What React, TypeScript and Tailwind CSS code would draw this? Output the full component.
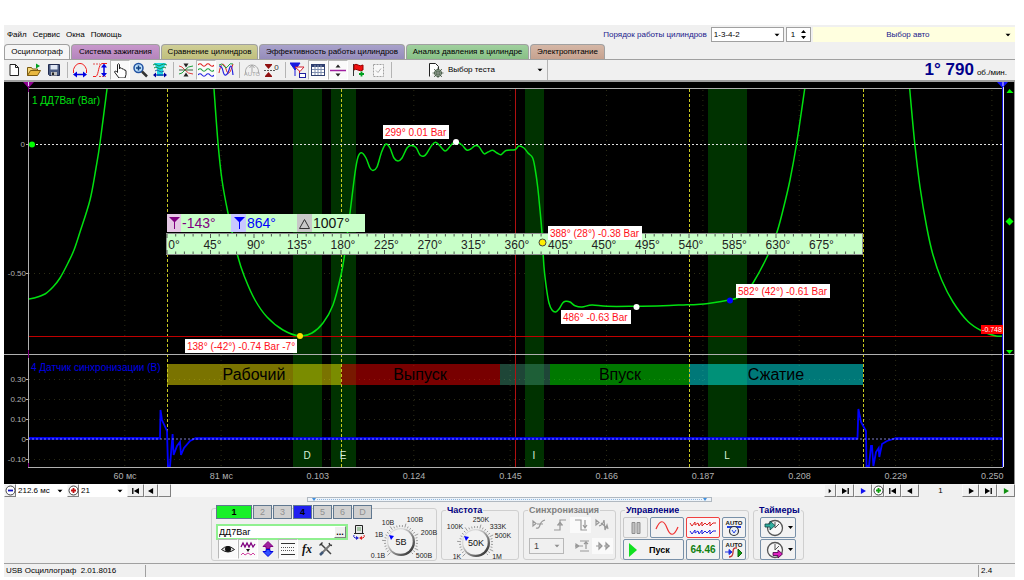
import { useState } from "react"
import type { ReactNode } from "react"
import { clsx } from "clsx"

type Point = [number, number]

const TABS = [
  { label: "Осциллограф", className: "w-[66px] bg-[#f6f6f6]" },
  { label: "Система зажигания", className: "w-[89px] bg-gradient-to-b from-[#c797cb] to-[#b585bd]" },
  { label: "Сравнение цилиндров", className: "w-[97px] bg-gradient-to-b from-[#cfce97] to-[#c0bf7c]" },
  { label: "Эффективность работы цилиндров", className: "w-[146px] bg-gradient-to-b from-[#a9a2cb] to-[#958cbb]" },
  { label: "Анализ давления в цилиндре", className: "w-[123px] bg-gradient-to-b from-[#a0d09e] to-[#88c086]" },
  { label: "Электропитание", className: "w-[75px] bg-gradient-to-b from-[#d5b7a6] to-[#c6a28f]" },
]

const PRESSURE: Point[][] = [
  [[28, 299], [34, 298], [45, 294], [53, 287], [60, 278], [68, 263], [74, 250], [80, 232], [90, 200], [96, 168], [100, 143], [107, 89]],
  [
    [214, 89], [218, 143], [222, 180], [228, 213], [238, 257], [245, 278], [255, 300], [267, 317], [283, 330], [300, 336],
    [312, 333], [323, 323], [333, 305], [341, 275], [345, 252], [350, 213], [355, 173], [358, 157], [361.5, 152.7], [366, 158],
    [370, 168], [373, 170.5], [377, 167], [381.7, 151.7], [386, 144], [390, 148], [394, 158], [398, 161], [402, 158],
    [407, 148], [411, 145.5], [416, 147.5], [420, 155], [424, 156], [427, 153], [432, 145], [435.7, 142.3], [440, 146],
    [445, 151], [449, 147.7], [453, 143], [456.7, 141.7], [462, 145], [466.7, 150], [470.7, 149], [475, 145.7],
    [479, 146.7], [484, 153.7], [488, 152], [492.7, 150.3], [497, 153], [501, 154.7], [506, 150.5], [515, 149.7],
    [519, 146], [524, 148], [528, 153], [532.7, 158], [535.3, 170], [537.7, 187], [540, 210], [542, 233], [544, 267],
    [546.7, 290], [549, 303], [552, 310], [555.7, 312], [559, 309], [562.7, 303], [565.7, 301.3], [570, 302],
    [575, 305.7], [582, 307], [592, 305], [607, 306.3], [633, 306.3], [663, 305.8], [687, 304.7], [697, 304.6],
    [713, 302.7], [729, 300], [737, 298], [745, 292], [753, 283], [768, 255], [776.7, 233], [783, 210], [790, 180],
    [796.7, 143], [804.7, 89],
  ],
  [[909.7, 89], [914.7, 143], [920, 187], [926.7, 227], [933, 255], [941.7, 280], [953, 302], [968, 321.5], [982, 331], [996, 336], [1003, 336]],
]

const SYNC =
  "M28 438H160L160.5 410L162 420L167 431L168 466H170L172.6 434L173.6 455L177 446L180 442L181 455L184 448L190 441L195 438.5" +
  "H857.5L858.4 409L861 422L866 431L866.5 466H869L871 446H872L873.4 466L876 452L878.7 448L879.3 457L882 444L887 441L895 438.5H1003"

const BANDS = [
  { x: 293, width: 29, label: "D", at: 307 },
  { x: 331, width: 25, label: "E", at: 343 },
  { x: 525, width: 19, label: "I", at: 534 },
  { x: 708, width: 39, label: "L", at: 727 },
]

const STROKES = [
  { x: 167, width: 174, label: "Рабочий", at: 254, fill: "#f4e600" },
  { x: 341, width: 159, label: "Выпуск", at: 420, fill: "#f00000" },
  { x: 500, width: 50, label: "", at: 0, fill: "#3c8c6e" },
  { x: 550, width: 139, label: "Впуск", at: 620, fill: "#00f000" },
  { x: 689, width: 174, label: "Сжатие", at: 776, fill: "#00f0f0" },
]

const TIMES = ["60 мс", "81 мс", "0.103", "0.124", "0.145", "0.166", "0.187", "0.208", "0.229", "0.250"]

const CALLOUTS = [
  { x: 383, y: 125, width: 66, text: "299° 0.01 Bar" },
  { x: 548, y: 226, width: 94, text: "388° (28°) -0.38 Bar" },
  { x: 561, y: 310, width: 70, text: "486° -0.63 Bar" },
  { x: 185, y: 339, width: 112, text: "138° (-42°) -0.74 Bar -7°" },
  { x: 736, y: 284, width: 94, text: "582° (42°) -0.61 Bar" },
]

// Catmull-Rom spline through the samples
function smooth(points: Point[]) {
  let d = `M${points[0][0]} ${points[0][1]}`
  for (let i = 0; i < points.length - 1; i++) {
    const a = points[Math.max(i - 1, 0)]
    const b = points[i]
    const c = points[i + 1]
    const e = points[Math.min(i + 2, points.length - 1)]
    d += `C${b[0] + (c[0] - a[0]) / 6} ${b[1] + (c[1] - a[1]) / 6} ${c[0] - (e[0] - b[0]) / 6} ${c[1] - (e[1] - b[1]) / 6} ${c[0]} ${c[1]}`
  }
  return d
}

function Icon({ children, className = "h-4 w-4", box = "0 0 16 16" }: { children: ReactNode; className?: string; box?: string }) {
  return (
    <svg viewBox={box} className={clsx("shrink-0", className)} fill="none" stroke="currentColor" aria-hidden="true">
      {children}
    </svg>
  )
}

function ToolButton({ label, pressed, children }: { label: string; pressed?: boolean; children: ReactNode }) {
  return (
    <button
      type="button"
      aria-label={label}
      className={clsx(
        "flex h-5 w-5 shrink-0 items-center justify-center",
        pressed && "border border-[#b8b8b8] border-r-white border-b-white bg-[#fafafa]",
      )}
    >
      <Icon>{children}</Icon>
    </button>
  )
}

function Separator() {
  return (
    <div className="flex w-[6px] shrink-0 justify-center">
      <div className="h-4 w-px bg-[#b4b4b4]" />
    </div>
  )
}

function Caret() {
  return (
    <svg viewBox="0 0 7 4" className="pointer-events-none absolute top-1/2 right-1 h-[3px] w-[6px] -translate-y-1/2" aria-hidden="true">
      <path d="M0 0h7L3.5 4z" fill="currentColor" />
    </svg>
  )
}

function Select({ label, value, className, selectClass }: { label: string; value: string; className?: string; selectClass?: string }) {
  return (
    <div className={clsx("relative", className)}>
      <select aria-label={label} className={clsx("block h-full w-full appearance-none outline-none", selectClass)}>
        <option>{value}</option>
      </select>
      <Caret />
    </div>
  )
}

function MenuBar() {
  return (
    <div className="flex h-[19px] items-center">
      <nav className="flex gap-[6px] pl-[3px]">
        {["Файл", "Сервис", "Окна", "Помощь"].map((item) => (
          <button key={item} type="button">
            {item}
          </button>
        ))}
      </nav>
      <label htmlFor="order" className="mr-1 ml-auto text-[#1a1a8c]">
        Порядок работы цилиндров
      </label>
      <div className="relative mr-[2px] h-[15px] w-[73px]">
        <select id="order" className="block h-full w-full appearance-none border border-[#a0a0a0] bg-white pl-[2px]">
          <option>1-3-4-2</option>
        </select>
        <Caret />
      </div>
      <div className="mr-[2px] flex h-[15px] w-[25px] items-center border border-[#a0a0a0] bg-white">
        <input aria-label="Цилиндр" defaultValue="1" className="w-3 min-w-0 flex-1 pl-1 outline-none" />
        <svg viewBox="0 0 7 11" className="mr-[3px] h-[11px] w-[7px]" aria-hidden="true">
          <path d="M1 4h5L3.5 1zM1 7h5L3.5 10z" />
        </svg>
      </div>
      <Select
        label="Авто"
        value="Выбор авто"
        className="h-[15px] w-1/5"
        selectClass="bg-[#ffffdf] pr-3 text-center text-[#1a1a8c]"
      />
    </div>
  )
}

function Tabs() {
  const [active, setActive] = useState(0)
  return (
    <div role="tablist" className="flex h-[15px] items-end gap-px">
      {TABS.map((tab, i) => (
        <button
          key={tab.label}
          type="button"
          role="tab"
          aria-selected={i === active}
          onClick={() => setActive(i)}
          className={clsx(
            "h-[15px] rounded-t-sm border border-b-0 border-[#a0a0a0] text-center leading-[14px] whitespace-nowrap",
            tab.className,
          )}
        >
          {tab.label}
        </button>
      ))}
    </div>
  )
}

function Toolbar() {
  return (
    <div className="flex h-[23px] items-center border-t border-b-2 border-[#a0a0a0] bg-[#f0f0f0]">
      <ToolButton label="Новый">
        <path d="M4 2.5h5.500l3 3v8h-8.500zM9.500 2.500v3h3" fill="#fff" stroke="#222" />
      </ToolButton>
      <ToolButton label="Открыть">
        <path d="M1.500 13.500v-8h4l1 1.500h5v2" fill="#f5d878" stroke="#7a5a10" />
        <path d="M1.500 13.500l3-5h10l-3 5z" fill="#e8b840" stroke="#7a5a10" />
        <path d="M10 1.500l4 2.500-4 2.500z" fill="#00a020" stroke="none" />
      </ToolButton>
      <ToolButton label="Сохранить">
        <path d="M2.500 2.500h11v11h-10l-1-1z" fill="#4a5a80" stroke="#222c50" />
        <path d="M4.500 3h7v4.500h-7z" fill="#dfe6f4" stroke="none" />
        <path d="M5 10h6v3.500h-6z" fill="#c0c0c0" stroke="none" />
        <path d="M6 10.500h2v2.500h-2z" fill="#222" stroke="none" />
      </ToolButton>
      <Separator />
      <ToolButton label="Период">
        <path d="M1.500 11V7.500C3 3.500 5 1.500 8 1.500s5 2 6.500 6V11" stroke="#f02020" />
        <path d="M3 12.500h10" stroke="#0000e0" strokeWidth="1.500" />
        <path d="M1 12.500l4-3v6zM15 12.500l-4-3v6z" fill="#0000e0" stroke="none" />
      </ToolButton>
      <ToolButton label="Размах">
        <path d="M1 14.500h3C7 12 6 3 10 1.500h5" stroke="#f02020" />
        <path d="M1 2h7M7 14.500h7" stroke="#e05050" strokeDasharray="2 1" />
        <path d="M12 4v9" stroke="#0000e0" strokeWidth="1.500" />
        <path d="M12 1.500l3 4h-6zM12 15l3-4h-6z" fill="#0000e0" stroke="none" />
      </ToolButton>
      <ToolButton label="Рука" pressed>
        <path
          d="M5.500 9V2.500q1-1.500 2 0V7l.3-1q1.500-.8 2 .6l.2.400q1.400-.8 1.800.5l.2.500q1.500-.6 2 1v3.500l-1 3.500H7L2.500 10q.5-1.800 2-.5l1 1z"
          fill="#fff"
          stroke="#222"
        />
      </ToolButton>
      <ToolButton label="Лупа">
        <circle cx="6.500" cy="6" r="4.500" fill="#b8dcf8" stroke="#2050a0" strokeWidth="1.500" />
        <path d="M4 6h5M6.500 3.500v5" stroke="#104080" strokeWidth="1.500" />
        <path d="M10 9.500l5 5" stroke="#333" strokeWidth="2.500" />
      </ToolButton>
      <ToolButton label="Анализ">
        <path d="M2 1h12l-3 6v7H5V7z" fill="#20d8e0" stroke="none" />
        <path d="M1 3q2-2 4 0t4 0 6 0M2 6q2-2 4 0t4 0 4 0" stroke="#109050" />
        <path d="M3 9q2-2 4 0t5 0" stroke="#2060a0" />
        <path d="M2 13h12" stroke="#0000a0" />
        <path d="M1 13l3-2.500v5zM15 13l-3-2.500v5z" fill="#0000a0" stroke="none" />
      </ToolButton>
      <Separator />
      <ToolButton label="Совместить">
        <path d="M1 4q3 0 6 4t8 4" stroke="#e04040" />
        <path d="M1 12q3 0 6-4t8-4" stroke="#20a040" />
        <path d="M1 8h14" stroke="#406040" />
        <path d="M8 5.500l-2.500-4h5zM8 10.500l-2.500 4h5z" fill="#222" stroke="none" />
      </ToolButton>
      <ToolButton label="Раздельно" pressed>
        <path d="M0 3q2-2.500 4 0t4 0 4 0 4 0" stroke="#e02020" strokeWidth="1.200" />
        <path d="M0 8q2-2.500 4 0t4 0 4 0 4 0" stroke="#20a040" strokeWidth="1.200" />
        <path d="M0 13q2-2.500 4 0t4 0 4 0 4 0" stroke="#2020e0" strokeWidth="1.200" />
      </ToolButton>
      <ToolButton label="Наложить">
        <path d="M1 11C3 0 6 0 8 7s4 5 7-5" stroke="#e02020" />
        <path d="M1 4q3 0 4 5t3 4 3-5 2-4 2 9" stroke="#2020e0" strokeWidth="1.200" />
        <path d="M1 3q3-2.500 5 1t4 0 5-2" stroke="#20a040" />
      </ToolButton>
      <Separator />
      <ToolButton label="Авто">
        <path d="M2 12a6.500 6.500 0 1 1 12 0M8 10V3M5.500 6L8 3l2.500 3" stroke="#a8a8a8" />
        <text x="8" y="14" fontSize="6" textAnchor="middle" fill="#a0a0a0" stroke="none">AUTO</text>
      </ToolButton>
      <ToolButton label="Ноль">
        <path d="M0 8.500h12" stroke="#555" strokeDasharray="2 1" />
        <path d="M1 3h7L4.500 7zM1 14h7L4.500 10z" fill="#901010" stroke="none" />
        <path d="M1 2.500h7M1 14.500h7" stroke="#901010" />
        <text x="12.500" y="8" fontSize="8" textAnchor="middle" fill="#333" stroke="none">0</text>
      </ToolButton>
      <Separator />
      <ToolButton label="Маркеры">
        <path d="M0 1h10L5 8zM5 7v7" fill="#1818e0" stroke="#1818e0" />
        <path d="M5 5h9l-4 4.500zM9.500 9v5" fill="#fff" stroke="#d02030" />
        <rect x="9.500" y="11.500" width="6" height="4" fill="#fff" stroke="#2020a0" />
      </ToolButton>
      <ToolButton label="Таблица" pressed>
        <rect x="1.500" y="2.500" width="13" height="11" fill="#fff" stroke="#304070" />
        <path d="M2 4h12" stroke="#304070" strokeWidth="2" />
        <path d="M5 3v10M8 3v10M11 3v10M2 7.500h12M2 10.500h12" stroke="#8090b0" />
      </ToolButton>
      <ToolButton label="Разделитель" pressed>
        <path d="M0 8.500h16" stroke="#a020a0" strokeWidth="1.500" />
        <path d="M8 2.500l2.500 3h-5zM8 14.500l2.500-3h-5z" fill="#222" stroke="none" />
      </ToolButton>
      <ToolButton label="Флаг">
        <path d="M3.500 2v12" stroke="#333" />
        <path d="M4 3q2-1.500 4 0t5 0v5q-2.500 1.500-5 0t-4 0z" fill="#f01010" stroke="#900" />
        <path d="M11.500 9.500v5M9 12h5" stroke="#00a020" strokeWidth="1.800" />
      </ToolButton>
      <ToolButton label="Отчёт">
        <path d="M3.500 2.500h10v12h-10z" fill="#f8f8f8" stroke="#a0a0a0" strokeDasharray="2 1" />
        <path d="M6 8.500l2 2 3-4" stroke="#b0b0b0" />
      </ToolButton>
      <Separator />
      <div className="ml-8 flex h-5 w-[122px] items-center border-r border-[#b4b4b4]">
        <Icon className="h-4 w-[18px]" box="0 0 18 16">
          <path d="M3.500 14.500v-13h6l3 3v3" fill="#fff" stroke="#222" />
          <circle cx="12" cy="11" r="3.500" fill="#b8ccb8" stroke="#445544" />
          <path d="M12 5.500v11M6.500 11h11M8 7l8 8M16 7l-8 8" stroke="#445544" strokeWidth="0.800" />
          <circle cx="12" cy="11" r="1.200" fill="#fff" stroke="#445544" />
        </Icon>
        <Select label="Тест" value="Выбор теста" className="h-4 flex-1" selectClass="bg-transparent pl-1" />
      </div>
      <div className="ml-auto flex items-baseline gap-[3px] pr-2">
        <span className="text-[17px] leading-5 font-bold text-[#00008b]">1° 790</span>
        <span>об./мин.</span>
      </div>
    </div>
  )
}

function Ruler() {
  const ticks = Array.from({ length: 80 }, (_, i) => i)
  return (
    <g>
      <rect x="167" y="214" width="198" height="18" fill="#c8ffc8" />
      <rect x="167" y="214" width="14" height="18" fill="#e4c8e4" />
      <rect x="231" y="214" width="15" height="18" fill="#c8c8ff" />
      <rect x="297" y="214" width="15" height="18" fill="#c8c8c8" />
      <path d="M169 217h11l-5 5v7h-1v-7z" fill="#800080" />
      <path d="M234 217h11l-5 5v7h-1v-7z" fill="#0000ff" />
      <path d="M299.500 228.500h10l-5-9z" fill="none" stroke="#333" />
      <g fontSize="14">
        <text x="182" y="228" fill="#800080">-143°</text>
        <text x="247" y="228" fill="#0000ff">864°</text>
        <text x="313" y="228" fill="#111">1007°</text>
      </g>
      <rect x="166.500" y="233.500" width="696" height="21" fill="#c8ffc8" stroke="#909090" />
      {ticks.map((i) => {
        const x = 167 + i * 8.7
        const size = i % 5 === 0 ? 4 : 2.5
        return <path key={i} d={`M${x} 234v${size}M${x} 254v${-size}`} stroke="#333" strokeWidth="0.800" />
      })}
      <g fontSize="12" fill="#222" textAnchor="middle">
        {Array.from({ length: 16 }, (_, i) => (
          <text key={i} x={i === 0 ? 174 : 169 + i * 43.5} y="249">
            {i * 45}°
          </text>
        ))}
      </g>
    </g>
  )
}

function Scope() {
  return (
    <svg
      viewBox="4 82 1011 402"
      className="block h-auto w-full bg-black font-['Liberation_Sans',sans-serif]"
      role="img"
      aria-label="Осциллограмма давления"
    >
      <g stroke="#2c2c14" strokeDasharray="1 4">
        {TIMES.map((t, i) => (
          <path key={t} d={`M${(124.8 + i * 96.35).toFixed(1)} 90V467`} />
        ))}
        {[273.5, 379.5, 399.5, 419.5, 459.5].map((y) => (
          <path key={y} d={`M29 ${y}H1002`} />
        ))}
      </g>

      {BANDS.map((b) => (
        <rect key={b.label} x={b.x} y="88" width={b.width} height="379" fill="#003200" />
      ))}

      <text x="31" y="371" fontSize="10" fill="#0000e6">4 Датчик синхронизации (В)</text>
      {STROKES.map((s) => (
        <g key={s.x}>
          <rect x={s.x} y="364" width={s.width} height="21" fill={s.fill} opacity="0.5" />
          <text x={s.at} y="380" fontSize="16" fill="#000" textAnchor="middle">{s.label}</text>
        </g>
      ))}

      <g stroke="#c8c820" strokeDasharray="3 2">
        {[167.5, 341.5, 689.5, 863.5].map((x) => (
          <path key={x} d={`M${x} 89V467`} />
        ))}
      </g>
      <path d="M515.500 88V467" stroke="#b01010" />
      <path d="M28 336.500H1003" stroke="#c00000" />
      <path d="M36 144.500H1003" stroke="#e0e0e0" strokeDasharray="2 2" />

      <g fill="none" stroke="#00e010" strokeWidth="1.500">
        {PRESSURE.map((p) => (
          <path key={p[0][0]} d={smooth(p)} />
        ))}
      </g>

      <path d={SYNC} fill="none" stroke="#0000ff" strokeWidth="1.800" />
      <path d="M28 438.500H160M195 438.500H857M895 438.500H1003" stroke="#0000f0" strokeWidth="2.600" />
      <path d="M28 439H1003" stroke="#a0a0ff" strokeWidth="0.800" strokeDasharray="2 2" />

      <path d="M28.500 88.500H1003M4 354.500H1014M28 467.500H1003M28.500 88V467" fill="none" stroke="#b0b0b0" />
      <path d="M1002.500 86V467" stroke="#1010e0" />
      <path d="M1003.500 86V467" stroke="#e8e8ff" />
      <path d="M28.500 84V92M28.500 350V358M28.500 463V467" stroke="#800080" />
      <path d="M23 82h11l-5.500 6z" fill="#900090" />
      <path d="M997 82h11l-5.500 6z" fill="#1010ff" />
      <path d="M28.500 82v4M1003 82v4" stroke="#e0d0ff" />
      <path d="M1009.500 89l4 4h-7zM1009.500 217.500l4 4-4 4-4-4zM1006 350h7l-3.500 4z" fill="#00ff00" />
      <path d="M1014.500 82V484" stroke="#909090" />

      <text x="32" y="104" fontSize="10" fill="#00e010">1 ДД7Bar (Bar)</text>
      <g fontSize="8" fill="#b0b0b0" textAnchor="end">
        <text x="25" y="147">0</text>
        <text x="26" y="276">-0.50</text>
        <text x="26" y="382">0.30</text>
        <text x="26" y="402">0.20</text>
        <text x="26" y="422">0.10</text>
        <text x="26" y="442">0</text>
        <text x="26" y="462">-0.10</text>
      </g>
      <path d="M26 144.500h3M26 273.500h3M26 379.500h3M26 399.500h3M26 419.500h3M26 439.500h3M26 459.500h3" stroke="#b0b0b0" />
      <g fontSize="9" fill="#b0b0b0" textAnchor="middle">
        {TIMES.map((t, i) => (
          <text key={t} x={125 + i * 96.35} y="479">{t}</text>
        ))}
      </g>
      <g fontSize="10" fill="#d8f0d8" textAnchor="middle">
        {BANDS.map((b) => (
          <text key={b.label} x={b.at} y="459">{b.label}</text>
        ))}
      </g>

      <Ruler />

      <g fontSize="10">
        {CALLOUTS.map((c) => (
          <g key={c.text}>
            <rect x={c.x} y={c.y} width={c.width} height="14" fill="#fff" />
            <text x={c.x + 2} y={c.y + 11} fill="#ff1020">{c.text}</text>
          </g>
        ))}
      </g>
      <rect x="981" y="325" width="22" height="9" fill="#ff0000" />
      <text x="992" y="332" fontSize="7" fill="#fff" textAnchor="middle">-0.748</text>

      <circle cx="32" cy="144.500" r="3" fill="#00ff00" />
      <circle cx="456" cy="142" r="3" fill="#fff" />
      <circle cx="636.500" cy="307" r="3" fill="#fff" />
      <circle cx="300" cy="336" r="3" fill="#ffe000" />
      <circle cx="542.500" cy="242.500" r="3.500" fill="#ffee00" stroke="#444" />
      <circle cx="730" cy="300.500" r="3" fill="#0000ff" />
    </svg>
  )
}

function NavButton({ label, width, color = "#000", path }: { label: string; width: string; color?: string; path: string }) {
  return (
    <button
      type="button"
      aria-label={label}
      className={clsx(
        "flex h-[13px] shrink-0 items-center justify-center border border-[#f8f8f8] border-r-[#808080] border-b-[#808080] bg-[#f0f0f0]",
        width,
      )}
    >
      <svg viewBox="0 0 9 7" className="h-[6px] w-2" fill={color} aria-hidden="true">
        <path d={path} />
      </svg>
    </button>
  )
}

function ZoomButton({ label, color, plus }: { label: string; color: string; plus?: boolean }) {
  return (
    <button
      type="button"
      aria-label={label}
      className="flex h-[13px] w-3 shrink-0 items-center justify-center border border-[#f8f8f8] border-r-[#808080] border-b-[#808080] bg-[#f0f0f0]"
    >
      <Icon className="h-[11px] w-[11px]" box="0 0 11 11">
        <circle cx="5.500" cy="5.500" r="4.500" fill="#fff" stroke="#444" />
        <path d={plus ? "M3 5.500h5M5.500 3v5" : "M3 5.500h5"} stroke={color} strokeWidth="1.800" />
      </Icon>
    </button>
  )
}

const NEXT = "M2 0l6 3.500-6 3.500z"
const PREV = "M7 0l-6 3.500 6 3.500z"
const FIRST = "M0 0h1.500v7h-1.500zM8 0v7l-6-3.500z"
const LAST = "M7.500 0h1.500v7h-1.500zM1 0v7l6-3.500z"

function Transport() {
  return (
    <div className="flex h-[13px] items-center bg-[#f8f8f8]">
      <ZoomButton label="Сжать" color="#1010c0" />
      <Select label="Развёртка" value="212.6 мс" className="h-[13px] w-[51px]" selectClass="bg-white pl-[2px]" />
      <ZoomButton label="Растянуть" color="#c01010" plus />
      <Select label="Масштаб" value="21" className="h-[13px] w-12" selectClass="bg-white pl-[2px]" />
      <NavButton label="В начало" width="w-[17px]" path={FIRST} />
      <NavButton label="Назад" width="w-[14px]" path={PREV} />
      <NavButton label="Позиция" width="w-[13px]" path="" />
      <div className="flex-1" />
      <NavButton label="Вперёд" width="w-3" path="M3 1l3 2.500-3 2.500z" />
      <NavButton label="В конец" width="w-[18px]" path={LAST} />
      <NavButton label="Воспроизвести" width="w-[18px]" color="#1010f0" path={NEXT} />
      <ZoomButton label="Добавить кадр" color="#10a010" plus />
      <NavButton label="Первый кадр" width="w-[17px]" path={FIRST} />
      <NavButton label="Предыдущий кадр" width="w-[18px]" path={PREV} />
      <input aria-label="Кадр" defaultValue="1" className="h-[13px] w-[43px] bg-[#f0f0f0] text-center outline-none" />
      <NavButton label="Следующий кадр" width="w-[17px]" path={NEXT} />
      <NavButton label="Последний кадр" width="w-[18px]" path={LAST} />
      <NavButton label="Запись" width="w-[18px]" color="#109010" path={NEXT} />
    </div>
  )
}

interface KnobProps {
  label: string
  box: string
  cx: number
  cy: number
  value: string
  marks: { x: number; y: number; text: string }[]
}

function Knob({ label, box, cx, cy, value, marks }: KnobProps) {
  const ticks = Array.from({ length: 28 }, (_, i) => ((135 + i * 10) * Math.PI) / 180)
  return (
    <svg viewBox={box} className="h-[52px] w-[72px] shrink-0 font-['Liberation_Sans',sans-serif]" role="img" aria-label={label}>
      <defs>
        <linearGradient id={`${label}-rim`} x1="0" y1="0" x2="1" y2="1">
          <stop offset="0.300" stopColor="#d8d8d8" />
          <stop offset="1" stopColor="#101010" />
        </linearGradient>
      </defs>
      {ticks.map((a, i) => {
        const r = i % 5 === 0 ? 19 : 17
        return (
          <path
            key={i}
            d={`M${cx + 15 * Math.cos(a)} ${cy + 15 * Math.sin(a)}L${cx + r * Math.cos(a)} ${cy + r * Math.sin(a)}`}
            stroke="#777"
            strokeWidth="0.700"
          />
        )
      })}
      <circle cx={cx} cy={cy} r="14" fill={`url(#${label}-rim)`} />
      <circle cx={cx - 0.5} cy={cy - 0.5} r="12.200" fill="#f2f2f2" />
      <path d={`M${cx - 12} ${cy - 7}l5 1-3 4z`} fill="#0000ff" />
      <text x={cx} y={cy + 3} fontSize="9" textAnchor="middle" fill="#111">{value}</text>
      <g fontSize="7" fill="#222" textAnchor="middle">
        {marks.map((m) => (
          <text key={m.text} x={m.x} y={m.y}>{m.text}</text>
        ))}
      </g>
    </svg>
  )
}

function Group({ title, muted, className, children }: { title: string; muted?: boolean; className?: string; children: ReactNode }) {
  return (
    <fieldset className={clsx("h-[54px] min-w-0 rounded-[3px] border border-[#cfcfcf]", className)}>
      <legend className={clsx("ml-1 px-px text-[9px] leading-[9px] font-bold", muted ? "text-[#808080]" : "text-[#000080]")}>
        {title}
      </legend>
      {children}
    </fieldset>
  )
}

function ChannelPanel() {
  const channels = ["1", "2", "3", "4", "5", "6", "D"]
  return (
    <section className="mt-1 flex h-[53px] w-[226px] rounded-[3px] border border-[#cfcfcf]">
      <div className="-mt-1 w-[156px] shrink-0 pl-1">
        <div className="flex gap-px text-[9px]">
          {channels.map((c) => (
            <button
              key={c}
              type="button"
              className={clsx(
                "h-[14px] shrink-0 border border-[#607890] leading-3",
                c === "1" && "w-9 bg-[#18f028] font-bold text-black",
                c === "4" && "w-[19px] bg-[#2020f0] font-bold text-black",
                c !== "1" && c !== "4" && "w-[19px] bg-[#d0d0d0] text-[#909090]",
              )}
            >
              {c}
            </button>
          ))}
        </div>
        <div className="mt-[5px] flex items-center gap-1 text-[9px]">
          <div className="flex h-4 w-[132px] border-2 border-[#90f090] bg-white">
            <input aria-label="Датчик" defaultValue="ДД7Bar" className="min-w-0 flex-1 pl-px outline-none" />
            <button type="button" aria-label="Выбрать датчик" className="w-3 border border-white border-r-[#808080] border-b-[#808080] bg-[#f0f0f0] leading-[6px] font-bold">
              ...
            </button>
          </div>
          <button type="button" aria-label="Переключить датчик">
            <Icon className="h-4 w-[14px]" box="0 0 14 16">
              <path d="M3.500 1.500h7v8h-7zM2 9.500h10" fill="#e8e8e8" stroke="#222" />
              <path d="M5 4h4M5 6h4" stroke="#60a060" />
              <path d="M5 14H3q-2-1-1-3" stroke="#2020d0" />
              <path d="M9 14h2q2-1 1-3" stroke="#e02020" />
              <path d="M4 12v4l3-2z" fill="#2020d0" stroke="none" />
              <path d="M10 12v4l-3-2z" fill="#e02020" stroke="none" />
            </Icon>
          </button>
        </div>
        <div className="mt-px flex h-4 items-center pl-[2px]">
          <ToolButton label="Видимость" pressed>
            <path d="M1.500 8.500q6-6 13 0-6.500 5-13 0z" fill="#ddd" stroke="#222" />
            <circle cx="8" cy="8" r="3" fill="#111" stroke="none" />
          </ToolButton>
          <ToolButton label="Фильтр" pressed>
            <path d="M1 6l2-4 2 4 2-4 2 4 2-4 2 4 2-3" stroke="#800080" strokeWidth="1.300" />
            <path d="M8 11l-2-3h4z" fill="#111" stroke="none" />
            <path d="M1 14l2-2 2 2 3-2 3 2 2-2 2 2" stroke="#d040a0" />
          </ToolButton>
          <ToolButton label="Сдвиг">
            <path d="M8 0.500l5 5h-3v2H6v-2H3z" fill="#a020a0" stroke="#800080" />
            <path d="M8 15.500l5-5h-3v-2H6v2H3z" fill="#3050ff" stroke="#0000e0" />
          </ToolButton>
          <ToolButton label="Уровни" pressed>
            <path d="M1 2.500h14M1 13.500h14" stroke="#333" />
            <path d="M1 6.500h14M1 9.500h14" stroke="#555" strokeDasharray="1 1" />
          </ToolButton>
          <ToolButton label="Функция">
            <text x="7" y="12" fontSize="12" fontStyle="italic" fontWeight="bold" fontFamily="Liberation Serif, serif" textAnchor="middle" fill="#111" stroke="none">fx</text>
          </ToolButton>
          <button type="button" aria-label="Настройки" className="flex w-4 items-center">
            <Icon>
              <path d="M3 3l10 10" stroke="#444" strokeWidth="1.500" />
              <path d="M12 4L3 13" stroke="#777" strokeWidth="2" />
              <path d="M1.500 4.500l3-3M11 2l1 2 2 .500" stroke="#333" strokeWidth="1.300" />
              <path d="M2 14l3-3" stroke="#405878" strokeWidth="2.500" />
            </Icon>
          </button>
        </div>
      </div>
      <Knob
        label="Диапазон"
        box="370 509 68 52"
        cx={401}
        cy={542}
        value="5B"
        marks={[
          { x: 378, y: 558, text: "0.1B" },
          { x: 379, y: 537, text: "1B" },
          { x: 388, y: 525, text: "10B" },
          { x: 415, y: 522, text: "100B" },
          { x: 429, y: 535, text: "200B" },
          { x: 424, y: 558, text: "500B" },
        ]}
      />
    </section>
  )
}

function SyncButton({ label, path, pressed }: { label: string; path: string; pressed?: boolean }) {
  return (
    <button type="button" aria-label={label} disabled className={clsx("flex h-4 w-[21px] items-center justify-center", pressed && "bg-[#fafafa]")}>
      <Icon className="h-[14px] w-[14px]" box="0 0 14 14">
        <path d={path} stroke="#989898" strokeWidth="1.200" />
      </Icon>
    </button>
  )
}

const CONTROL = "flex items-center justify-center rounded-[2px] border border-[#7890a8] bg-[#f2f2f2]"

function AutoIcon({ run }: { run?: boolean }) {
  return (
    <Icon className="h-[18px] w-5" box="0 0 20 18">
      <text x="10" y="5.500" fontSize="6" fontWeight="bold" textAnchor="middle" fill="#111" stroke="none">AUTO</text>
      {run ? (
        <>
          <path d="M5 16q4 0 4-5t4-4" stroke="#c03030" strokeWidth="1.300" />
          <path d="M1 11h4M5 8.500l3 2.500-3 2.500z" fill="#2030e0" stroke="#2030e0" />
          <path d="M14 8l4 4-4 4z" fill="#10a010" stroke="#106010" />
        </>
      ) : (
        <>
          <path d="M3 8h14" stroke="#2040e0" strokeWidth="2" />
          <circle cx="10" cy="12" r="4.500" fill="#e8eef8" stroke="#333" strokeWidth="1.200" />
          <path d="M8 11l2 3 2-3" stroke="#2040e0" />
        </>
      )}
    </Icon>
  )
}

function TimerButton({ label, stop }: { label: string; stop?: boolean }) {
  return (
    <button type="button" aria-label={label} className={clsx(CONTROL, "h-[21px] w-9 gap-1")}>
      <Icon className="h-[18px] w-5" box="0 0 20 18">
        <circle cx="11" cy="9" r="7.500" fill="#f8f8f8" stroke="#555" strokeWidth="1.300" />
        <path d="M11 9V3M11 9l4-4" stroke="#555" />
        {stop ? (
          <path d="M9 11.500h5v-2.500l4.500 4-4.500 4v-2.500H9z" fill="#e020c0" stroke="#400040" strokeWidth="0.800" />
        ) : (
          <path d="M1 5h5V2l5 4.500L6 11V8H1z" fill="#30b0a0" stroke="#104040" strokeWidth="0.800" />
        )}
      </Icon>
      <svg viewBox="0 0 7 4" className="h-[3px] w-[5px]" aria-hidden="true">
        <path d="M0 0h7L3.500 4z" />
      </svg>
    </button>
  )
}

function ControlPanel() {
  return (
    <div className="border-b border-[#a0a0a0] bg-[#f0f0f0]">
      <div className="flex h-[7px] justify-center">
        <div className="flex h-[5px] w-2/5 items-center justify-between border border-[#b0b8c0] bg-[#eef4fa] px-1">
          <svg viewBox="0 0 4 3" className="h-[3px] w-1" fill="#4090e0" aria-hidden="true">
            <path d="M0 0h4L2 3z" />
          </svg>
          <span className="mx-px flex-1 border-t border-dotted border-[#90b8e0]" />
          <svg viewBox="0 0 4 3" className="h-[3px] w-1" fill="#4090e0" aria-hidden="true">
            <path d="M0 0h4L2 3z" />
          </svg>
        </div>
      </div>
      <div className="flex h-[59px] items-start justify-center gap-1 pr-1">
        <ChannelPanel />
        <Group title="Частота" className="mt-[2px] w-[78px]">
          <div className="-mt-1">
            <Knob
              label="Частота"
              box="444 511 72 52"
              cx={478}
              cy={543}
              value="50K"
              marks={[
                { x: 459, y: 559, text: "1K" },
                { x: 457, y: 529, text: "100K" },
                { x: 483, y: 522, text: "250K" },
                { x: 500, y: 529, text: "333K" },
                { x: 505, y: 538, text: "500K" },
                { x: 499, y: 559, text: "1M" },
              ]}
            />
          </div>
        </Group>
        <Group title="Синхронизация" muted className="mt-[2px] w-[93px]">
          <div className="mt-[2px] ml-1 flex">
            <SyncButton label="Фронт" path="M1 3v5l3-2.500zM4 10q3 1 4-3t5-5M5 6h6" />
            <SyncButton label="Передний фронт" path="M1 12h6V2h6M4 7h6M7 4l-2 3h4z" />
            <SyncButton label="Задний фронт" path="M1 2h6v10h6M11 2v7M9 7l2 3 2-3" pressed />
            <SyncButton label="Помехи" path="M1 2v5l3-2.500zM4 8q4-1 5-6l1 10 2-5 1 4M6 5l6 5" />
          </div>
          <div className="mt-[5px] ml-[5px] flex items-center text-[9px]">
            <Select
              label="Канал синхронизации"
              value="1"
              className="mr-[7px] h-4 w-[35px] text-[#909090]"
              selectClass="border border-[#b8b8b8] bg-[#f0f0f0] pl-1 text-[#444444]"
            />
            <SyncButton label="Уровень" path="M0 7h8M5 2h9M5 12h9M11 4v6M9 5l2-2 2 2M1 5v4l3-2z" />
            <SyncButton label="Центр" path="M0 7h6M3 4l3 3-3 3zM8 7h6M10 4l3 3-3 3z" pressed />
          </div>
        </Group>
        <Group title="Управление" className="mt-[2px] w-[129px]">
          <div className="mt-[2px] ml-[2px] grid w-[124px] grid-cols-[25px_34px_34px_24px] gap-x-[2px] gap-y-px">
            <button type="button" aria-label="Пауза" disabled className="flex h-[21px] items-center justify-center rounded-[2px] border border-[#c8c8c8]">
              <Icon className="h-3 w-[10px]" box="0 0 10 12">
                <path d="M1 0.500h3v11H1zM6 0.500h3v11H6z" fill="#c0c0c0" stroke="#909090" />
              </Icon>
            </button>
            <button type="button" aria-label="Синус" className={clsx(CONTROL, "h-[21px]")}>
              <Icon className="h-4 w-6" box="0 0 24 16">
                <path d="M1 9Q7-5 12 8t11-1" stroke="#f03030" strokeWidth="1.200" />
              </Icon>
            </button>
            <button type="button" aria-label="Каналы" className="flex h-[21px] items-center justify-center rounded-[2px] border border-[#f04040] bg-[#faf6f8]">
              <Icon className="h-4 w-7" box="0 0 28 16">
                <path d="M1 3l2 3 3-4v3l3-2 1 3 3-4v4l3-3 2 2 3-3v4l3-3h3" stroke="#e02020" />
                <path d="M1 11l2 3 3-4v3l3-2 1 3 3-4v4l3-3 2 2 3-3v4l3-3h3" stroke="#2020e0" />
              </Icon>
            </button>
            <button type="button" aria-label="Автоматика" className={clsx(CONTROL, "h-[21px]")}>
              <AutoIcon />
            </button>
            <button type="button" className={clsx(CONTROL, "col-span-2 h-[21px] gap-3 pr-2 text-[9px] font-bold")}>
              <Icon className="h-[14px] w-2" box="0 0 8 14">
                <path d="M0 0v14l8-7z" fill="#10e020" stroke="none" />
              </Icon>
              Пуск
            </button>
            <output className={clsx(CONTROL, "h-[21px] bg-[#e8f0f8] text-[10px] font-bold text-[#108010]")}>64.46</output>
            <button type="button" aria-label="Автопуск" className={clsx(CONTROL, "h-[21px]")}>
              <AutoIcon run />
            </button>
          </div>
        </Group>
        <Group title="Таймеры" className="mt-[2px] w-[51px]">
          <div className="mt-[2px] ml-[6px] flex flex-col gap-px">
            <TimerButton label="Таймер пуска" />
            <TimerButton label="Таймер остановки" stop />
          </div>
        </Group>
      </div>
    </div>
  )
}

export default function App() {
  return (
    <div className="min-h-screen bg-white pt-[25px] pr-[9px] pl-1 font-['Liberation_Sans',Arial,sans-serif] text-[8px] leading-3 text-black">
      <main className="bg-[#f0f0f0]">
        <MenuBar />
        <Tabs />
        <Toolbar />
        <Scope />
        <Transport />
        <ControlPanel />
        <footer className="mt-px flex h-3 items-center">
          <span className="w-[142px] border-r border-[#a0a0a0] pl-[2px]">USB Осциллограф&nbsp; 2.01.8016</span>
          <span className="h-3 flex-1 border-r border-[#a0a0a0]" />
          <span className="w-9 pl-[2px]">2.4</span>
        </footer>
      </main>
    </div>
  )
}
